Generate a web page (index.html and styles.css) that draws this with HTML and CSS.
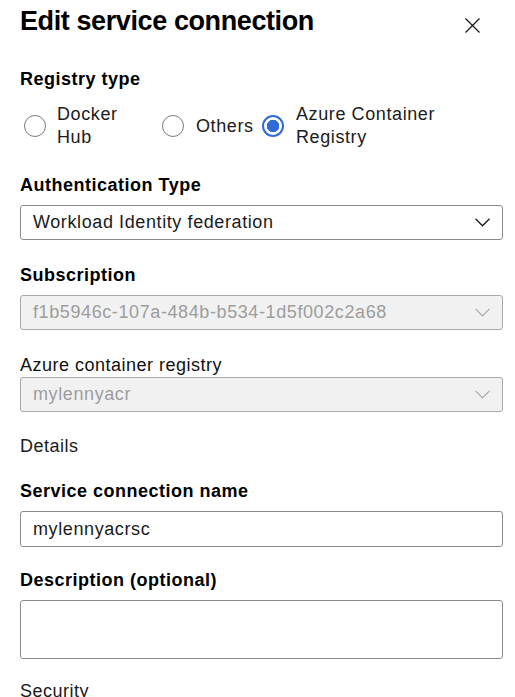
FILE: index.html
```html
<!DOCTYPE html>
<html lang="en">
<head>
<meta charset="utf-8">
<title>Edit service connection</title>
<link rel="stylesheet" href="styles.css">
</head>
<body>
<div class="panel">
  <div class="header">
    <h1 class="title">Edit service connection</h1>
    <button class="close" aria-label="Close">
      <svg width="15" height="15" viewBox="0 0 15 15"><path d="M0.5 0.5 L14.5 14.5 M14.5 0.5 L0.5 14.5" stroke="#1a1a1a" stroke-width="1.3" fill="none"/></svg>
    </button>
  </div>

  <div class="label label-first">Registry type</div>
  <div class="radio-group">
    <div class="opt opt-docker"><span class="radio"></span><span class="opt-text">Docker Hub</span></div>
    <div class="opt opt-others"><span class="radio"></span><span class="opt-text">Others</span></div>
    <div class="opt opt-azure"><span class="radio checked"></span><span class="opt-text">Azure Container Registry</span></div>
  </div>

  <div class="field field-auth">
    <div class="label">Authentication Type</div>
    <div class="select">
      <span>Workload Identity federation</span>
      <svg class="chev" width="15" height="9" viewBox="0 0 15 9"><path d="M0.5 0.8 L7.5 7.8 L14.5 0.8" stroke="#1a1a1a" stroke-width="1.3" fill="none"/></svg>
    </div>
  </div>

  <div class="field">
    <div class="label">Subscription</div>
    <div class="select disabled">
      <span>f1b5946c-107a-484b-b534-1d5f002c2a68</span>
      <svg class="chev" width="15" height="9" viewBox="0 0 15 9"><path d="M0.5 0.8 L7.5 7.8 L14.5 0.8" stroke="#a8a8a8" stroke-width="1.2" fill="none"/></svg>
    </div>
  </div>

  <div class="field">
    <div class="label label-plain">Azure container registry</div>
    <div class="select disabled">
      <span>mylennyacr</span>
      <svg class="chev" width="15" height="9" viewBox="0 0 15 9"><path d="M0.5 0.8 L7.5 7.8 L14.5 0.8" stroke="#a8a8a8" stroke-width="1.2" fill="none"/></svg>
    </div>
  </div>

  <div class="section">Details</div>

  <div class="field field-tight">
    <div class="label">Service connection name</div>
    <div class="input">mylennyacrsc</div>
  </div>

  <div class="field field-tight">
    <div class="label">Description (optional)</div>
    <div class="textarea"></div>
  </div>

  <div class="section section-security">Security</div>
</div>
</body>
</html>
```

FILE: styles.css
```css
* { box-sizing: border-box; }

body {
  margin: 0;
  background: #ffffff;
  font-family: "Liberation Sans", Arial, sans-serif;
  color: #1b1b1b;
  font-size: 18px;
  overflow: hidden;
}

.panel {
  padding: 0 12px 0 20px;
}

.header {
  display: flex;
  justify-content: space-between;
  align-items: flex-start;
  margin-top: 4px;
}

.title {
  margin: 0;
  font-size: 27px;
  line-height: 34px;
  font-weight: 700;
  color: #000;
  letter-spacing: -0.4px;
}

.close {
  border: 0;
  background: none;
  padding: 0;
  margin: 14px 23px 0 0;
  width: 15px;
  height: 15px;
  display: block;
}
.close svg { display: block; }

.label {
  font-weight: 700;
  line-height: 23px;
  color: #000;
  margin-bottom: 8px;
  letter-spacing: 0.5px;
}
.label-plain {
  font-weight: 400;
  margin-bottom: 0;
  color: #111;
}
.label-first {
  margin-top: 30px;
  margin-bottom: 0;
}

.radio-group {
  display: grid;
  grid-template-columns: 138px 100px 1fr;
  margin-top: 12px;
}

.opt {
  display: flex;
  align-items: center;
  padding-left: 4px;
  line-height: 23px;
  letter-spacing: 0.6px;
}
.opt-text { margin-left: 11px; }
.opt-docker .opt-text { width: 80px; }
.opt-azure .opt-text { width: 165px; margin-left: 12px; }
.opt-others .opt-text { margin-left: 12px; }

.radio {
  flex: none;
  width: 22px;
  height: 22px;
  border-radius: 50%;
  border: 1px solid #7a7a7a;
  background: #fff;
}
.radio.checked {
  border: 2px solid #2e6bd6;
  background: radial-gradient(circle, #2e6bd6 0 6px, #fff 6.5px);
}

.field { margin-top: 24px; }
.field-auth { margin-top: 25px; }
.field-tight { margin-top: 22px; }

.select, .input {
  height: 35px;
  border: 1px solid #8c8c8c;
  border-radius: 3px;
  padding: 0 12px;
  display: flex;
  align-items: center;
  justify-content: space-between;
  letter-spacing: 0.6px;
  color: #1b1b1b;
}
.input { height: 36px; }
.select.disabled {
  background: #f1f1f1;
  border-color: #a9a9a9;
  color: #9d9d9d;
}
.chev { display: block; flex: none; }

.textarea {
  height: 59px;
  border: 1px solid #8c8c8c;
  border-radius: 3px;
}

.section {
  margin-top: 23px;
  line-height: 23px;
  letter-spacing: 0.5px;
}
.section-security { margin-top: 21px; }
```
